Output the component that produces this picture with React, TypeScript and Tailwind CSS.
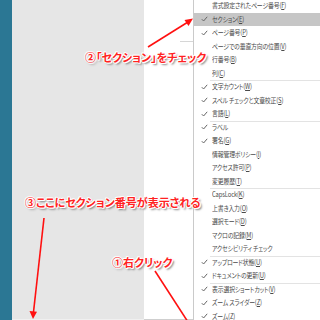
import React from "react";

type Item = { label: string; key?: string; checked?: boolean; sep?: boolean; active?: boolean };

const items: Item[] = [
  { label: "書式設定されたページ番号", key: "F" },
  { label: "セクション", key: "E", checked: true, active: true },
  { label: "ページ番号", key: "P", checked: true },
  { label: "ページでの垂直方向の位置", key: "V" },
  { label: "行番号", key: "B" },
  { label: "列", key: "C" },
  { label: "文字カウント", key: "W", checked: true, sep: true },
  { label: "スペル チェックと文章校正", key: "S", checked: true },
  { label: "言語", key: "L", checked: true },
  { label: "ラベル", checked: true, sep: true },
  { label: "署名", key: "G", checked: true },
  { label: "情報管理ポリシー", key: "I" },
  { label: "アクセス許可", key: "P" },
  { label: "変更履歴", key: "T" },
  { label: "CapsLock", key: "K", sep: true },
  { label: "上書き入力", key: "O" },
  { label: "選択モード", key: "D" },
  { label: "マクロの記録", key: "M" },
  { label: "アクセシビリティ チェック" },
  { label: "アップロード状態", key: "U", checked: true, sep: true },
  { label: "ドキュメントの更新", key: "U", checked: true },
  { label: "表示選択ショートカット", key: "V", checked: true, sep: true },
  { label: "ズーム スライダー", key: "Z", checked: true },
  { label: "ズーム", key: "Z", checked: true },
];

function Check() {
  return (
    <svg width="7" height="6" viewBox="0 0 7 6" className="block">
      <path d="M0.8 3.2 L2.6 5 L6.2 0.8" fill="none" stroke="#666666" strokeWidth="1" />
    </svg>
  );
}

const annot =
  "absolute whitespace-nowrap font-bold text-[#ff2222] text-[11px] leading-none [font-family:'Noto_Sans_CJK_JP',sans-serif] [font-feature-settings:'palt'] [text-shadow:1px_0_0_#fff,-1px_0_0_#fff,0_1px_0_#fff,0_-1px_0_#fff,1px_1px_0_#fff,-1px_-1px_0_#fff,2px_2px_2px_#777]";

export default function App() {
  return (
    <div className="relative w-[320px] h-[320px] overflow-hidden flex bg-white [font-family:'Noto_Sans_CJK_JP',sans-serif]">
      <div className="w-[12px] h-full bg-[#2b7794]" />
      <div className="w-[132px] h-full bg-[#e6e6e6] flex flex-col justify-end">
        <div className="h-px bg-[#f0f0f0]" />
      </div>
      <div className="w-[49px] h-full bg-white flex flex-col">
        <div className="h-[41px]" />
        <div className="h-px ml-[36px] bg-[#d6d6d6]" />
        <div className="flex-1" />
        <div className="h-px bg-[#cfcfcf]" />
      </div>
      <div className="flex-1 h-full border-l border-[#cacaca] bg-white overflow-hidden">
        <div className="-mt-[1px] flex flex-col">
          {items.map((it, i) => (
            <React.Fragment key={i}>
              {it.sep && <div className="h-px -mb-px ml-[16px] bg-[#e3e3e3]" />}
              <div
                className={`h-[13.5px] flex items-center ${it.active ? "bg-[#c6c6c6]" : ""}`}
              >
                <div className="w-[18px] shrink-0 flex justify-center pl-[2px]">{it.checked && <Check />}</div>
                <div className="text-[7px] tracking-[-0.2px] leading-none text-[#4a4a4a] whitespace-nowrap origin-left scale-x-[0.84] [font-feature-settings:'palt']">
                  {it.label}
                  {it.key && (
                    <>
                      (<span className="underline">{it.key}</span>)
                    </>
                  )}
                </div>
              </div>
            </React.Fragment>
          ))}
        </div>
      </div>

      <svg className="absolute inset-0 pointer-events-none" width="320" height="320" viewBox="0 0 320 320">
        <g stroke="#ff1010" strokeWidth="1.6" fill="#ff1010">
          <line x1="148" y1="47" x2="188" y2="22" />
          <polygon points="193,18.5 184.5,20 188.5,26" stroke="none" />
          <line x1="44" y1="218" x2="33.5" y2="312" />
          <polygon points="33,319 29.5,311 37,311.8" stroke="none" />
          <line x1="155" y1="271" x2="188" y2="322" />
        </g>
      </svg>

      <div className={annot} style={{ left: 85, top: 52 }}>②「セクション」をチェック</div>
      <div className={annot} style={{ left: 25, top: 197 }}>③ここにセクション番号が表示される</div>
      <div className={annot} style={{ left: 112, top: 257 }}>①右クリック</div>
    </div>
  );
}
